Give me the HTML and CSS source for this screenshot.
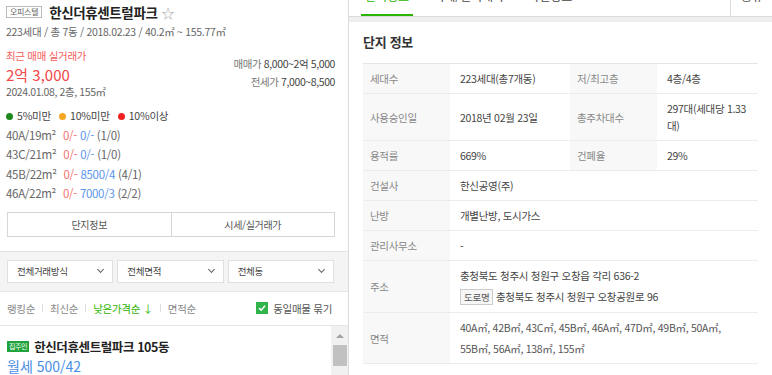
FILE: index.html
```html
<!DOCTYPE html>
<html lang="ko">
<head>
    <meta charset="UTF-8">
    <title>한신더휴센트럴파크</title>
    <link rel="stylesheet" href="styles.css">
</head>
<body>
<div class="wrap">
    <div class="left">
        <div class="summary">
            <div class="title-row">
                <span class="type-badge">오피스텔</span>
                <span class="complex-name">한신더휴센트럴파크</span>
                <span class="star">☆</span>
            </div>
            <div class="sub">223세대 / 총 7동 / 2018.02.23 / 40.2㎡ ~ 155.77㎡</div>

            <div class="price-row">
                <div class="recent">
                    <div class="recent-label">최근 매매 실거래가</div>
                    <div class="recent-price">2억 3,000</div>
                    <div class="recent-date">2024.01.08, 2층, 155㎡</div>
                </div>
                <div class="ranges">
                    <div><span class="gray">매매가</span> 8,000~2억 5,000</div>
                    <div><span class="gray">전세가</span> 7,000~8,500</div>
                </div>
            </div>

            <div class="legend">
                <span><i class="dot green"></i>5%미만</span>
                <span><i class="dot orange"></i>10%미만</span>
                <span><i class="dot red"></i>10%이상</span>
            </div>

            <div class="sizes">
                <div class="size-row">40A/19m² <span class="r">0/-</span> <span class="b">0/-</span> (1/0)</div>
                <div class="size-row">43C/21m² <span class="r">0/-</span> <span class="b">0/-</span> (1/0)</div>
                <div class="size-row">45B/22m² <span class="r">0/-</span> <span class="b">8500/4</span> (4/1)</div>
                <div class="size-row">46A/22m² <span class="r">0/-</span> <span class="b">7000/3</span> (2/2)</div>
            </div>

            <div class="btns">
                <button>단지정보</button>
                <button>시세/실거래가</button>
            </div>
        </div>

        <div class="filters">
            <div class="select">전체거래방식 <span class="chev"></span></div>
            <div class="select">전체면적 <span class="chev"></span></div>
            <div class="select">전체동 <span class="chev"></span></div>
        </div>

        <div class="sort">
            <span>랭킹순</span><i class="sep"></i>
            <span>최신순</span><i class="sep"></i>
            <span class="active">낮은가격순 ↓</span><i class="sep"></i>
            <span>면적순</span>
            <label class="same">
                <span class="check">
                    <svg width="8" height="8" viewBox="0 0 8 8"><path d="M1 4.2 L3.2 6.2 L7 1.8" fill="none" stroke="#fff" stroke-width="1.6"/></svg>
                </span>
                동일매물 묶기
            </label>
        </div>

        <div class="list">
            <div class="item">
                <div class="item-title"><span class="owner">집주인</span> 한신더휴센트럴파크 105동</div>
                <div class="item-price">월세 500/42</div>
            </div>
            <div class="scrollbar">
                <div class="arrow"></div>
                <div class="thumb"></div>
            </div>
        </div>
    </div>

    <div class="right">
        <div class="tabs">
            <span class="tab on">단지정보</span>
            <span class="tab">시세/실거래가</span>
            <span class="tab">사진정보</span>
            <span class="tab-extra">공유</span>
        </div>
        <div class="band"></div>

        <div class="detail">
            <h2>단지 정보</h2>
            <table class="info">
                <colgroup>
                    <col class="c1"><col class="c2"><col class="c3"><col class="c4">
                </colgroup>
                <tr>
                    <th>세대수</th><td>223세대(총7개동)</td>
                    <th>저/최고층</th><td>4층/4층</td>
                </tr>
                <tr>
                    <th>사용승인일</th><td>2018년 02월 23일</td>
                    <th>총주차대수</th><td>297대(세대당 1.33대)</td>
                </tr>
                <tr>
                    <th>용적률</th><td>669%</td>
                    <th>건폐율</th><td>29%</td>
                </tr>
                <tr>
                    <th>건설사</th><td colspan="3">한신공영(주)</td>
                </tr>
                <tr>
                    <th>난방</th><td colspan="3">개별난방, 도시가스</td>
                </tr>
                <tr>
                    <th>관리사무소</th><td colspan="3">-</td>
                </tr>
                <tr>
                    <th>주소</th>
                    <td colspan="3" class="addr">
                        <div>충청북도 청주시 청원구 오창읍 각리 636-2</div>
                        <div><span class="road">도로명</span> 충청북도 청주시 청원구 오창공원로 96</div>
                    </td>
                </tr>
                <tr>
                    <th>면적</th>
                    <td colspan="3" class="area">40A㎡, 42B㎡, 43C㎡, 45B㎡, 46A㎡, 47D㎡, 49B㎡, 50A㎡,<br>55B㎡, 56A㎡, 138㎡, 155㎡</td>
                </tr>
            </table>
        </div>
    </div>
</div>
</body>
</html>
```

FILE: styles.css
```css
*
{
    box-sizing: border-box;
    font-family: "Noto Sans CJK KR", "Noto Sans", sans-serif;
}

body
{
    margin: 0;
    background-color: white;
    color: #333;
    width: 772px;
    height: 375px;
    overflow: hidden;
}

.wrap
{
    display: flex;
    height: 375px;
}

/* left column */

.left
{
    width: 349px;
    border-right: 1px solid #dcdcdc;
    display: flex;
    flex-direction: column;
}

.summary
{
    flex-shrink: 0;
    padding: 3px 13px 14px 6px;
    border-bottom: 1px solid #e2e2e2;
}

.title-row
{
    display: flex;
    align-items: center;
    height: 18px;
}

.type-badge
{
    font-size: 8px;
    line-height: 10px;
    padding: 0 3px;
    border: 1px solid #bbb;
    color: #666;
    letter-spacing: -0.3px;
}

.complex-name
{
    font-size: 13.5px;
    font-weight: bold;
    color: #222;
    margin-left: 7px;
    letter-spacing: -0.4px;
}

.star
{
    font-size: 13px;
    color: #aaa;
    margin-left: 4px;
}

.sub
{
    font-size: 10.5px;
    color: #666;
    line-height: 16px;
    margin-top: 3px;
    letter-spacing: -0.3px;
}

.price-row
{
    display: flex;
    justify-content: space-between;
    margin-top: 8px;
}

.recent-label
{
    font-size: 10.5px;
    color: #f45b5b;
    line-height: 16px;
    letter-spacing: -0.3px;
}

.recent-price
{
    font-size: 15px;
    color: #f04848;
    line-height: 20px;
    margin-top: 1px;
}

.recent-date
{
    font-size: 10.5px;
    color: #666;
    line-height: 14px;
    letter-spacing: -0.4px;
}

.ranges
{
    text-align: right;
    font-size: 10.5px;
    line-height: 18px;
    color: #444;
    padding-top: 7px;
    letter-spacing: -0.4px;
}

.gray
{
    color: #777;
}

.legend
{
    display: flex;
    gap: 8px;
    font-size: 10.5px;
    color: #444;
    line-height: 16px;
    margin-top: 9px;
    letter-spacing: -0.2px;
}

.dot
{
    display: inline-block;
    width: 7px;
    height: 7px;
    border-radius: 50%;
    margin-right: 4px;
    vertical-align: 0;
}

.green { background-color: #1e8a1e; }
.orange { background-color: #f5a623; }
.red { background-color: #f02020; }

.sizes
{
    margin-top: 2px;
}

.size-row
{
    font-size: 11.5px;
    line-height: 19.4px;
    color: #666;
    letter-spacing: -0.3px;
}

.size-row .r
{
    color: #f47272;
    margin-left: 4px;
}

.size-row .b
{
    color: #5b96ec;
}

.btns
{
    display: flex;
    margin-top: 8px;
    margin-left: 1px;
}

.btns button
{
    flex: 1;
    height: 25px;
    background: white;
    border: 1px solid #d6d6d6;
    font-size: 10px;
    color: #555;
    letter-spacing: -0.3px;
}

.btns button + button
{
    border-left: none;
}

.filters
{
    flex-shrink: 0;
    display: flex;
    gap: 4px;
    background-color: #f4f4f4;
    padding: 8px 14px 8px 7px;
    border-bottom: 1px solid #e6e6e6;
}

.select
{
    flex: 1;
    height: 23px;
    background: white;
    border: 1px solid #e0e0e0;
    font-size: 9.5px;
    color: #444;
    display: flex;
    align-items: center;
    justify-content: space-between;
    padding: 0 9px;
    letter-spacing: -0.3px;
}

.chev
{
    width: 5px;
    height: 5px;
    border-right: 1px solid #666;
    border-bottom: 1px solid #666;
    transform: rotate(45deg);
    margin-top: -3px;
}

.sort
{
    flex-shrink: 0;
    display: flex;
    align-items: center;
    height: 34px;
    padding: 0 16px 0 7px;
    font-size: 10.5px;
    color: #888;
    border-bottom: 1px solid #e6e6e6;
    letter-spacing: -0.3px;
}

.sort .active
{
    color: #2db400;
}

.sep
{
    width: 1px;
    height: 8px;
    background-color: #ddd;
    margin: 0 7px;
}

.same
{
    margin-left: auto;
    display: flex;
    align-items: center;
    gap: 5px;
    color: #555;
}

.check
{
    width: 12px;
    height: 12px;
    background-color: #2fb34a;
    display: flex;
    align-items: center;
    justify-content: center;
}

.list
{
    flex: 1;
    min-height: 0;
    overflow: hidden;
    display: flex;
}

.item
{
    flex: 1;
    padding: 13px 7px 0;
}

.item-title
{
    font-size: 12.5px;
    font-weight: bold;
    color: #222;
    line-height: 16px;
    display: flex;
    align-items: center;
    letter-spacing: -0.4px;
}

.owner
{
    font-size: 7px;
    font-weight: normal;
    color: white;
    background-color: #20a33c;
    padding: 0 2px;
    line-height: 11px;
    margin-right: 5px;
}

.item-price
{
    font-size: 14px;
    color: #4a8ee6;
    line-height: 18px;
    margin-top: 2px;
}

.scrollbar
{
    width: 17px;
    background-color: #f1f1f1;
    padding: 8px 1px 0;
    display: flex;
    flex-direction: column;
    align-items: center;
}

.arrow
{
    width: 0;
    height: 0;
    border-left: 4px solid transparent;
    border-right: 4px solid transparent;
    border-bottom: 4px solid #a3a3a3;
}

.thumb
{
    width: 14px;
    height: 21px;
    background-color: #c1c1c1;
    margin-top: 7px;
}

/* right column */

.right
{
    flex: 1;
    display: flex;
    flex-direction: column;
}

.tabs
{
    flex-shrink: 0;
    height: 17px;
    display: flex;
    border-bottom: 1px solid #dcdcdc;
    padding-left: 12px;
    overflow: hidden;
}

.tab
{
    font-size: 12px;
    line-height: 16px;
    margin-top: -12px;
    height: 28px;
    padding: 0 4px;
    margin-right: 16px;
    color: #444;
    white-space: nowrap;
}

.tab.on
{
    color: #2db400;
    border-bottom: 2px solid #2db400;
}

.tab-extra
{
    margin-left: auto;
    width: 42px;
    border-left: 1px solid #dcdcdc;
    font-size: 12px;
    line-height: 16px;
    margin-top: -12px;
    padding-left: 10px;
    color: #555;
    white-space: nowrap;
}

.band
{
    flex-shrink: 0;
    height: 5px;
    background-color: #efefef;
}

.detail
{
    padding: 11px 14px 0 14px;
}

.detail h2
{
    font-size: 13px;
    font-weight: bold;
    color: #333;
    margin: 0 0 12px;
    line-height: 18px;
    letter-spacing: -0.3px;
}

.info
{
    border-collapse: collapse;
    width: 395px;
    table-layout: fixed;
    border-top: 1px solid #e6e6e6;
}

.c1 { width: 87px; }
.c2 { width: 120px; }
.c3 { width: 87px; }
.c4 { width: 101px; }

.info th,
.info td
{
    font-size: 10.5px;
    font-weight: normal;
    text-align: left;
    line-height: 17px;
    padding: 6px 8px 6px 10px;
    border-bottom: 1px solid #ececec;
    vertical-align: middle;
    letter-spacing: -0.3px;
}

.info th
{
    background-color: #f8f8f8;
    color: #888;
    padding-left: 7px;
}

.info td
{
    color: #444;
}

.info .addr
{
    line-height: 21px;
    padding-top: 4px;
    padding-bottom: 4px;
}

.road
{
    font-size: 9.5px;
    border: 1px solid #ccc;
    background-color: #f6f6f6;
    padding: 0 3px;
    color: #555;
}

.info .area
{
    line-height: 21px;
    color: #555;
    padding-top: 4px;
    padding-bottom: 4px;
}
```
